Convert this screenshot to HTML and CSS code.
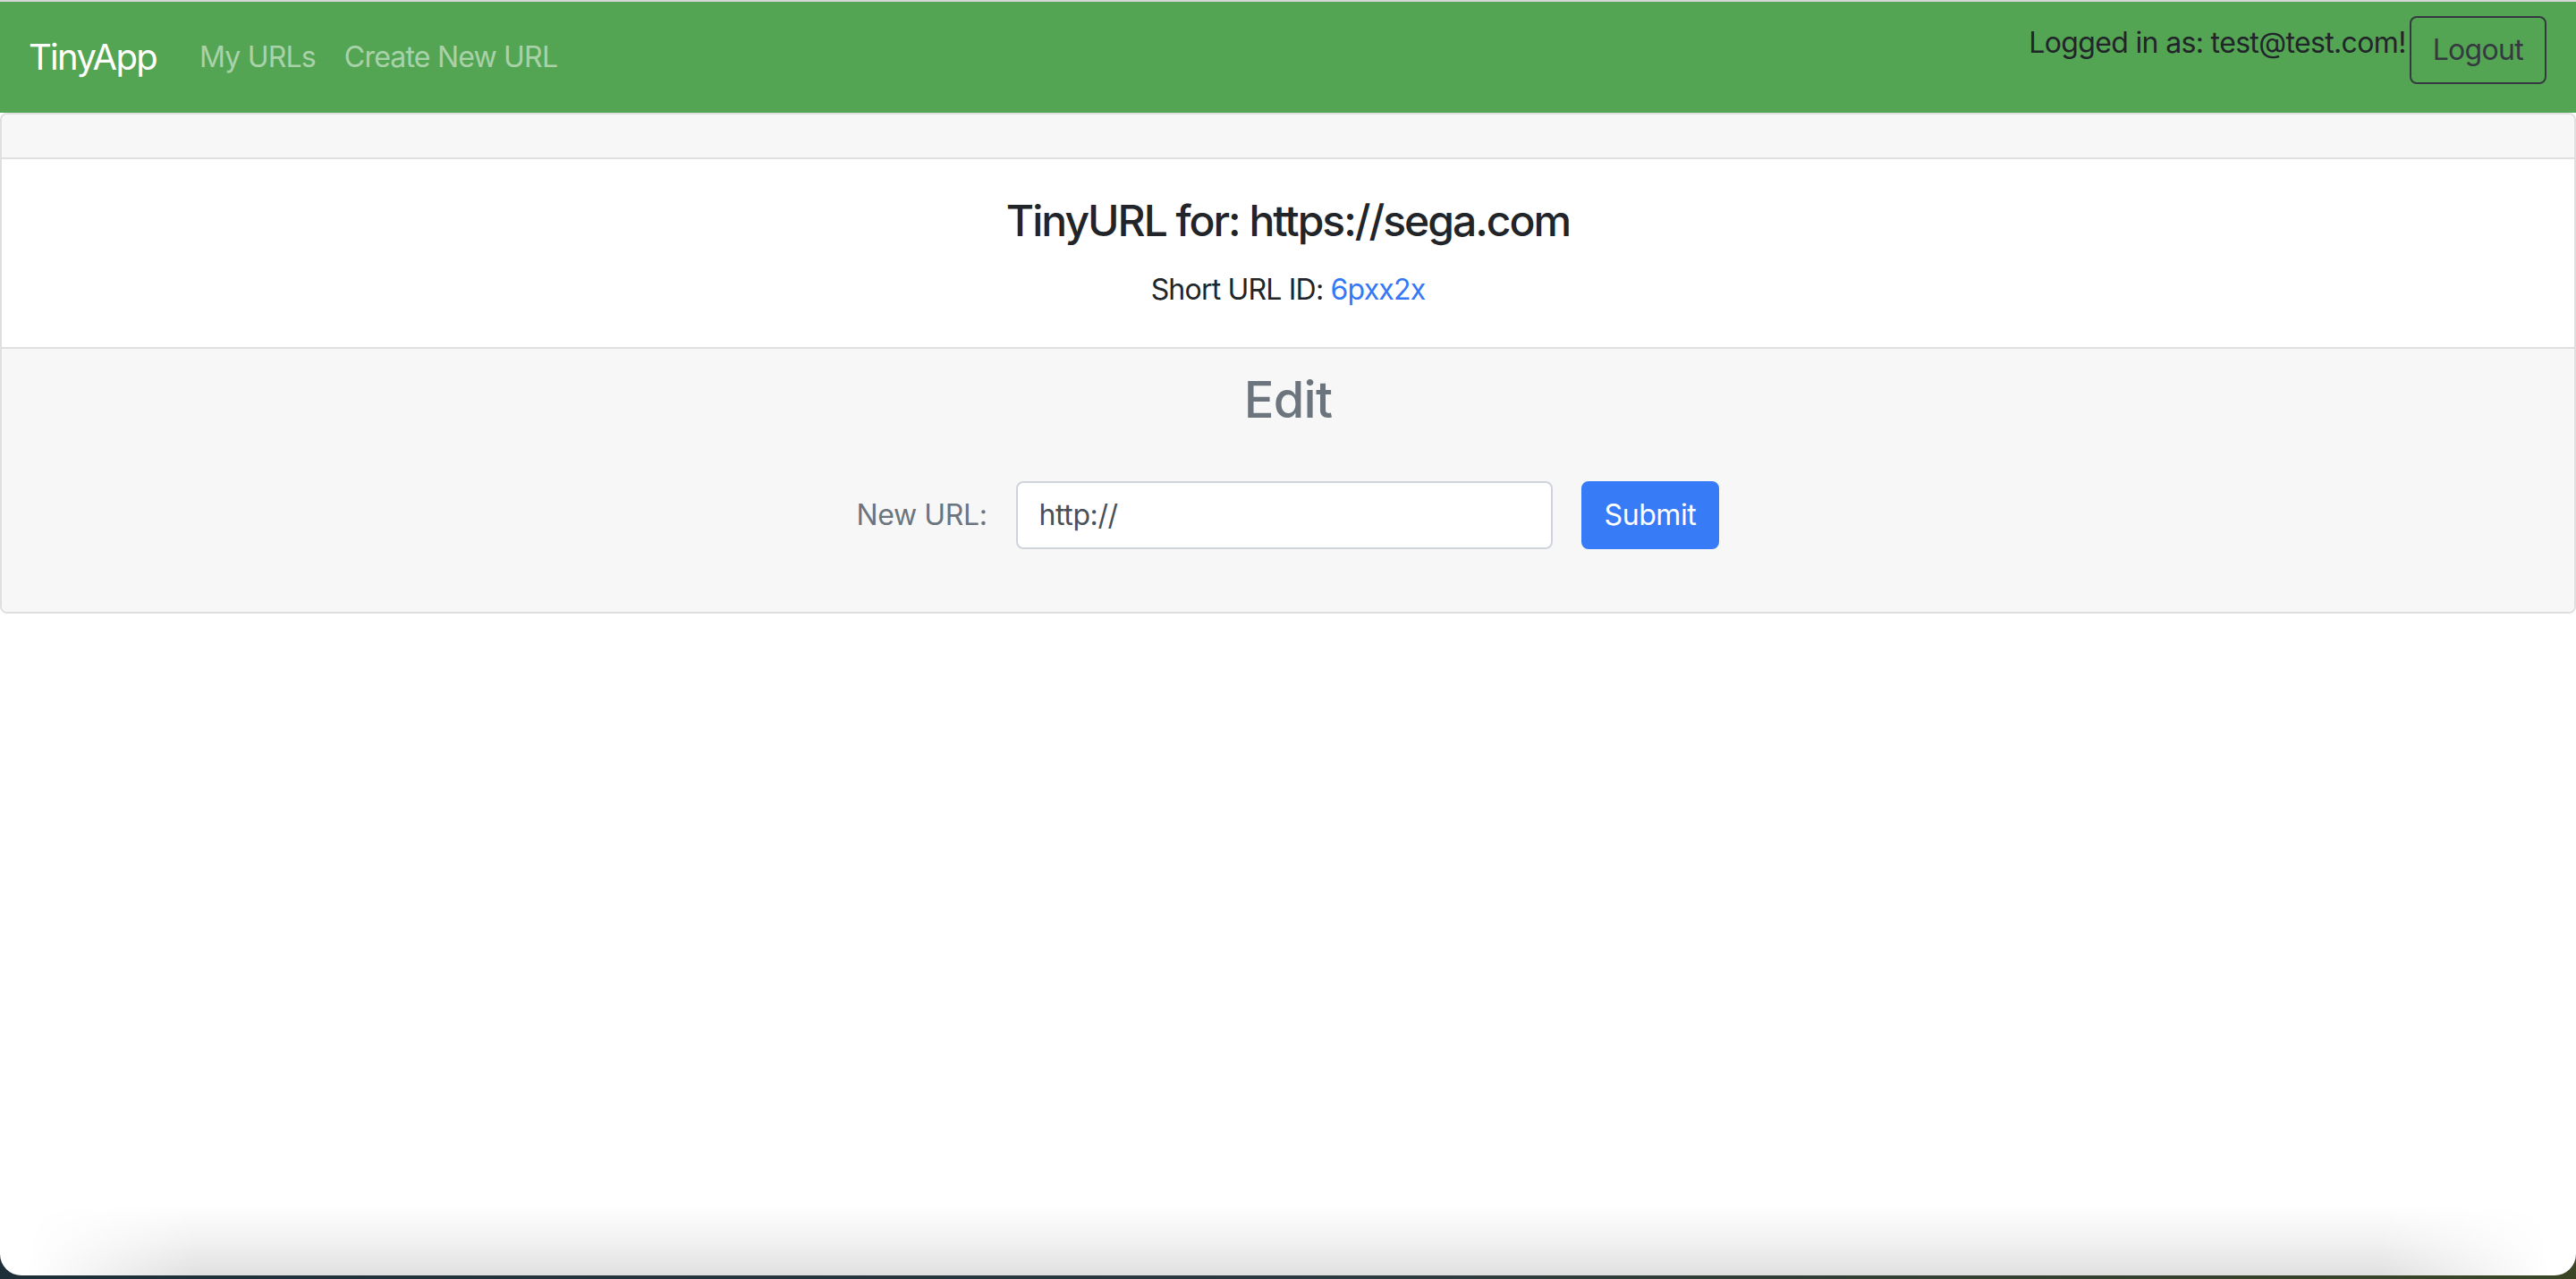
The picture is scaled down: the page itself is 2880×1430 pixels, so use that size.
FILE: index.html
```html
<!DOCTYPE html>
<html lang="en">
<head>
<meta charset="utf-8">
<title>TinyApp</title>
<link rel="stylesheet" href="styles.css">
</head>
<body>
  <div class="window">
    <div class="chrome-line"></div>
    <nav class="navbar">
      <div class="nav-left">
        <a class="brand" href="#">TinyApp</a>
        <a class="nav-link" href="#">My URLs</a>
        <a class="nav-link" href="#">Create New URL</a>
      </div>
      <div class="nav-right">
        <span class="logged">Logged in as: test@test.com!</span>
        <button class="btn-logout" type="button">Logout</button>
      </div>
    </nav>
    <main class="card">
      <div class="card-header"></div>
      <div class="card-body">
        <h4 class="card-title">TinyURL for: https://sega.com</h4>
        <p class="card-text">Short URL ID: <a class="short-link" href="#">6pxx2x</a></p>
      </div>
      <div class="card-footer">
        <h3 class="edit-title">Edit</h3>
        <form class="edit-form">
          <label class="edit-label" for="newurl">New URL:</label>
          <input class="edit-input" id="newurl" type="text" value="http://">
          <button class="btn-submit" type="button">Submit</button>
        </form>
      </div>
    </main>
    <div class="spacer"></div>
    <div class="shade"></div>
  </div>
  <div class="desktop"></div>
</body>
</html>
```

FILE: styles.css
```css
* { box-sizing: border-box; }

html, body {
  margin: 0;
  padding: 0;
  height: 1430px;
  overflow: hidden;
}

body {
  background: linear-gradient(to right, #1f2f3a 0%, #2b3a40 50%, #3b4526 100%);
  font-family: Inter, "Noto Sans", "Liberation Sans", sans-serif;
  color: #212529;
}

.window {
  height: 1426px;
  background: #ffffff;
  border-radius: 0 0 24px 24px;
  overflow: hidden;
  display: flex;
  flex-direction: column;
}

.chrome-line {
  height: 2px;
  background: #d6d6d6;
  flex: none;
}

.navbar {
  flex: none;
  height: 124px;
  background: #54a553;
  padding: 0 33px 0 32px;
  display: flex;
  justify-content: space-between;
  align-items: center;
}

.nav-left {
  display: flex;
  align-items: center;
}

.brand {
  font-size: 40px;
  line-height: 60px;
  color: #ffffff;
  text-decoration: none;
  margin-right: 32px;
  letter-spacing: -1.7px;
}

.nav-link {
  font-size: 32px;
  line-height: 48px;
  color: rgba(255, 255, 255, 0.5);
  text-decoration: none;
  padding: 0 16px;
  letter-spacing: -0.8px;
}

.nav-right {
  align-self: flex-start;
  margin-top: 16px;
  display: flex;
  align-items: flex-start;
  gap: 4px;
}

.logged {
  margin-top: 6px;
  font-size: 32px;
  line-height: 48px;
  color: #212529;
  letter-spacing: -0.65px;
}

.btn-logout {
  font-family: inherit;
  font-size: 32px;
  line-height: 48px;
  color: #343a40;
  background: transparent;
  border: 2px solid #343a40;
  border-radius: 8px;
  padding: 12px 24px;
  letter-spacing: -0.7px;
}

.card {
  flex: none;
  border: 2px solid #dfdfdf;
  border-radius: 8px;
  background: #ffffff;
  overflow: hidden;
}

.card-header {
  height: 50px;
  background: #f7f7f7;
  border-bottom: 2px solid #dfdfdf;
}

.card-body {
  padding: 40px;
  text-align: center;
}

.card-title {
  margin: 0 0 24px;
  font-size: 48px;
  line-height: 57.6px;
  font-weight: 500;
  color: #212529;
  letter-spacing: -2px;
}

.card-text {
  margin: 0;
  font-size: 32px;
  line-height: 48px;
  letter-spacing: -0.8px;
}

.short-link {
  color: #3478f6;
  text-decoration: none;
}

.card-footer {
  background: #f7f7f7;
  border-top: 2px solid #dfdfdf;
  padding: 24px 40px;
  text-align: center;
}

.edit-title {
  margin: 0 0 16px;
  font-size: 56px;
  line-height: 67.2px;
  font-weight: 500;
  color: #6c757d;
  letter-spacing: -0.8px;
}

.edit-form {
  margin: 57px 0 46px;
  display: flex;
  justify-content: center;
  align-items: center;
  gap: 32px;
}

.edit-label {
  font-size: 32px;
  line-height: 48px;
  color: #6c757d;
  letter-spacing: -0.4px;
}

.edit-input {
  width: 600px;
  height: 76px;
  font-family: inherit;
  font-size: 32px;
  line-height: 48px;
  color: #495057;
  background: #ffffff;
  border: 2px solid #ced4da;
  border-radius: 8px;
  padding: 12px 24px;
  outline: none;
  letter-spacing: -0.4px;
}

.btn-submit {
  height: 76px;
  font-family: inherit;
  font-size: 32px;
  line-height: 48px;
  color: #ffffff;
  background: #377cf6;
  border: 2px solid #377cf6;
  border-radius: 8px;
  padding: 12px 24px;
  letter-spacing: -0.4px;
}

.spacer {
  flex: 1;
}

.shade {
  flex: none;
  height: 80px;
  background: linear-gradient(to bottom, rgba(0, 0, 0, 0) 0%, rgba(0, 0, 0, 0.05) 50%, rgba(0, 0, 0, 0.12) 100%);
  -webkit-mask-image: linear-gradient(to right, transparent 30px, #000 220px, #000 calc(100% - 220px), transparent calc(100% - 30px));
  mask-image: linear-gradient(to right, transparent 30px, #000 220px, #000 calc(100% - 220px), transparent calc(100% - 30px));
}

.desktop {
  height: 4px;
}
```
